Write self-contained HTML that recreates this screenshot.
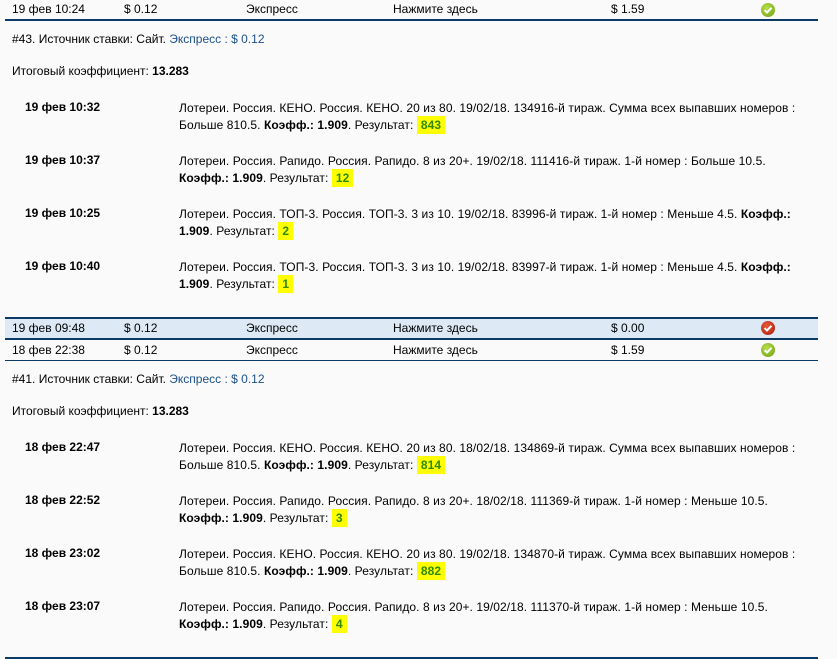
<!DOCTYPE html>
<html><head><meta charset="utf-8"><style>
body{margin:0;width:837px;height:659px;background:#fafafa;font-family:"Liberation Sans",sans-serif;font-size:12px;color:#000;position:relative;overflow:hidden}
.a{position:absolute;white-space:nowrap;line-height:15px}
.t{letter-spacing:0.08px}
.ln{position:absolute;left:5px;width:813px;background:#0b3a66}
.b{font-weight:bold}
.y{background:#ffff00;color:#2e8b00;font-weight:bold;padding:2px 4px}
.lk{color:#1a4f8a}
.ic{position:absolute;width:14px;height:14px;border-radius:50%}
.ic svg{position:absolute;left:0;top:0}
</style></head><body>

<div class="a" style="left:12px;top:2px">19 фев 10:24</div>
<div class="a" style="left:124px;top:2px">$ 0.12</div>
<div class="a" style="left:246px;top:2px">Экспресс</div>
<div class="a" style="left:393px;top:2px">Нажмите здесь</div>
<div class="a" style="left:611px;top:2px">$ 1.59</div>
<div class="ic" style="left:761px;top:3px;background:radial-gradient(circle at 40% 35%,#b8e04a,#6a9e10)"><svg width="14" height="14"><path d="M3.5 7.2 L6 9.5 L10.5 4.8" stroke="#fff" stroke-width="2" fill="none"/></svg></div>
<div class="ln" style="top:19px;height:2px"></div>

<div class="a" style="left:12px;top:32px">#43. Источник ставки: Сайт. <span class="lk">Экспресс : $ 0.12</span></div>
<div class="a" style="left:12px;top:64px">Итоговый коэффициент: <span class="b">13.283</span></div>

<div class="a b" style="left:25px;top:100px">19 фев 10:32</div>
<div class="a t" style="left:179px;top:100px;line-height:17px">Лотереи. Россия. КЕНО. Россия. КЕНО. 20 из 80. 19/02/18. 134916-й тираж. Сумма всех выпавших номеров :<br>Больше 810.5. <b>Коэфф.: 1.909</b>. Результат: <span class="y">843</span></div>
<div class="a b" style="left:25px;top:153px">19 фев 10:37</div>
<div class="a t" style="left:179px;top:153px;line-height:17px">Лотереи. Россия. Рапидо. Россия. Рапидо. 8 из 20+. 19/02/18. 111416-й тираж. 1-й номер : Больше 10.5.<br><b>Коэфф.: 1.909</b>. Результат: <span class="y">12</span></div>
<div class="a b" style="left:25px;top:206px">19 фев 10:25</div>
<div class="a t" style="left:179px;top:206px;line-height:17px">Лотереи. Россия. ТОП-3. Россия. ТОП-3. 3 из 10. 19/02/18. 83996-й тираж. 1-й номер : Меньше 4.5. <b>Коэфф.:</b><br><b>1.909</b>. Результат: <span class="y">2</span></div>
<div class="a b" style="left:25px;top:259px">19 фев 10:40</div>
<div class="a t" style="left:179px;top:259px;line-height:17px">Лотереи. Россия. ТОП-3. Россия. ТОП-3. 3 из 10. 19/02/18. 83997-й тираж. 1-й номер : Меньше 4.5. <b>Коэфф.:</b><br><b>1.909</b>. Результат: <span class="y">1</span></div>

<div class="ln" style="top:317px;height:2px"></div>
<div style="position:absolute;left:5px;top:319px;width:813px;height:19px;background:#dde9f5"></div>
<div class="a" style="left:12px;top:321px">19 фев 09:48</div>
<div class="a" style="left:124px;top:321px">$ 0.12</div>
<div class="a" style="left:246px;top:321px">Экспресс</div>
<div class="a" style="left:393px;top:321px">Нажмите здесь</div>
<div class="a" style="left:611px;top:321px">$ 0.00</div>
<div class="ic" style="left:761px;top:321px;background:radial-gradient(circle at 40% 35%,#e85a3a,#a81a0a)"><svg width="14" height="14"><path d="M3.5 7.2 L6 9.5 L10.5 4.8" stroke="#fff" stroke-width="2" fill="none"/></svg></div>
<div class="ln" style="top:338px;height:2px"></div>
<div class="a" style="left:12px;top:343px">18 фев 22:38</div>
<div class="a" style="left:124px;top:343px">$ 0.12</div>
<div class="a" style="left:246px;top:343px">Экспресс</div>
<div class="a" style="left:393px;top:343px">Нажмите здесь</div>
<div class="a" style="left:611px;top:343px">$ 1.59</div>
<div class="ic" style="left:761px;top:343px;background:radial-gradient(circle at 40% 35%,#b8e04a,#6a9e10)"><svg width="14" height="14"><path d="M3.5 7.2 L6 9.5 L10.5 4.8" stroke="#fff" stroke-width="2" fill="none"/></svg></div>
<div class="ln" style="top:360px;height:1px"></div>

<div class="a" style="left:12px;top:372px">#41. Источник ставки: Сайт. <span class="lk">Экспресс : $ 0.12</span></div>
<div class="a" style="left:12px;top:404px">Итоговый коэффициент: <span class="b">13.283</span></div>

<div class="a b" style="left:25px;top:440px">18 фев 22:47</div>
<div class="a t" style="left:179px;top:440px;line-height:17px">Лотереи. Россия. КЕНО. Россия. КЕНО. 20 из 80. 18/02/18. 134869-й тираж. Сумма всех выпавших номеров :<br>Больше 810.5. <b>Коэфф.: 1.909</b>. Результат: <span class="y">814</span></div>
<div class="a b" style="left:25px;top:493px">18 фев 22:52</div>
<div class="a t" style="left:179px;top:493px;line-height:17px">Лотереи. Россия. Рапидо. Россия. Рапидо. 8 из 20+. 18/02/18. 111369-й тираж. 1-й номер : Меньше 10.5.<br><b>Коэфф.: 1.909</b>. Результат: <span class="y">3</span></div>
<div class="a b" style="left:25px;top:546px">18 фев 23:02</div>
<div class="a t" style="left:179px;top:546px;line-height:17px">Лотереи. Россия. КЕНО. Россия. КЕНО. 20 из 80. 19/02/18. 134870-й тираж. Сумма всех выпавших номеров :<br>Больше 810.5. <b>Коэфф.: 1.909</b>. Результат: <span class="y">882</span></div>
<div class="a b" style="left:25px;top:599px">18 фев 23:07</div>
<div class="a t" style="left:179px;top:599px;line-height:17px">Лотереи. Россия. Рапидо. Россия. Рапидо. 8 из 20+. 19/02/18. 111370-й тираж. 1-й номер : Меньше 10.5.<br><b>Коэфф.: 1.909</b>. Результат: <span class="y">4</span></div>

<div class="ln" style="top:657px;height:2px"></div>
</body></html>
